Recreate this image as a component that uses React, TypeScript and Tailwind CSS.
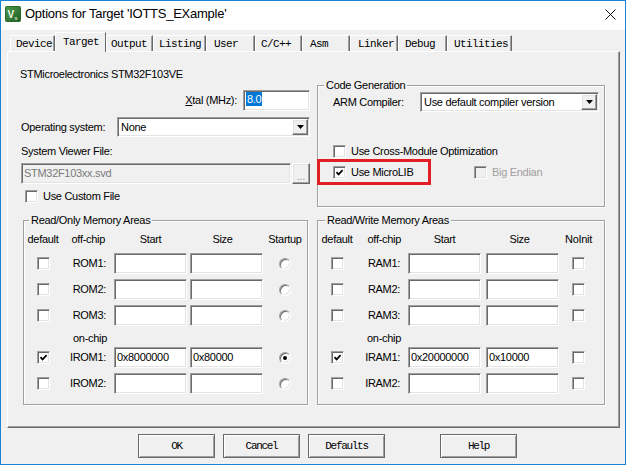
import React from 'react';

// 3D edge styles of the classic Windows controls
const sunken =
  'border border-t-[#a0a0a0] border-l-[#a0a0a0] border-r-white border-b-white shadow-[inset_1px_1px_0_#696969,inset_-1px_-1px_0_#e3e3e3]';
const raised =
  'border border-t-white border-l-white border-r-[#696969] border-b-[#696969] shadow-[inset_-1px_-1px_0_#a0a0a0,inset_1px_1px_0_#e3e3e3]';

const tabs = [
  { label: 'Device', cls: 'w-[45px] pl-[5px]' },
  { label: 'Target', cls: 'w-[51px] pl-[7px]', active: true },
  { label: 'Output', cls: 'w-[47px] pl-[4px]' },
  { label: 'Listing', cls: 'w-[53px] pl-[5px]' },
  { label: 'User', cls: 'w-[49px] pl-[7px]' },
  { label: 'C/C++', cls: 'w-[47px] pl-[5px]' },
  { label: 'Asm', cls: 'w-[48px] pl-[7px]' },
  { label: 'Linker', cls: 'w-[48px] pl-[7px]' },
  { label: 'Debug', cls: 'w-[49px] pl-[6px]' },
  { label: 'Utilities', cls: 'w-[65px] pl-[6px]' },
];

function Check({ checked = false, disabled = false }: { checked?: boolean; disabled?: boolean }) {
  return (
    <span
      className={`flex h-[13px] w-[13px] shrink-0 items-center justify-center ${sunken} ${
        disabled ? 'bg-[#f0f0f0]' : 'bg-white'
      }`}
    >
      {checked && (
        <svg width="9" height="9" viewBox="0 0 9 9">
          <path d="M1.5 4.2 L3.6 6.4 L7.6 2.2" fill="none" stroke="#000" strokeWidth="1.7" />
        </svg>
      )}
    </span>
  );
}

function Radio({ on = false }: { on?: boolean }) {
  return (
    <span
      className={`flex h-[12px] w-[12px] items-center justify-center rounded-full bg-white ${sunken}`}
    >
      {on && <span className="h-[4px] w-[4px] rounded-full bg-black" />}
    </span>
  );
}

function Combo({ value, className = '' }: { value: string; className?: string }) {
  return (
    <div className={`flex h-[20px] bg-white p-[1px] ${sunken} ${className}`}>
      <span className="flex flex-1 items-center pl-[2px]">{value}</span>
      <span className={`flex w-[16px] items-center justify-center bg-[#f0f0f0] ${raised}`}>
        <svg width="7" height="4" viewBox="0 0 7 4">
          <polygon points="0,0 7,0 3.5,4" fill="#000" />
        </svg>
      </span>
    </div>
  );
}

function Field({ value = '', className = '' }: { value?: string; className?: string }) {
  return (
    <div className={`flex h-[21px] w-[73px] items-start bg-white pl-[2px] pt-[2px] leading-[14px] ${sunken} ${className}`}>
      {value}
    </div>
  );
}

function Group({
  title,
  legend,
  className = '',
  children,
}: {
  title: string;
  legend: string;
  className?: string;
  children: React.ReactNode;
}) {
  return (
    <div
      className={`relative flex shrink-0 flex-col border border-[#a0a0a0] shadow-[inset_1px_1px_0_#fff,1px_1px_0_#fff] ${className}`}
    >
      <div className={`-mt-[7px] w-fit bg-[#f0f0f0] px-[2px] leading-[13px] ${legend}`}>{title}</div>
      {children}
    </div>
  );
}

type MemRow = { label: string; start?: string; size?: string; def?: boolean; on?: boolean };

function MemGroup({
  title,
  legend,
  className,
  rows,
  chip,
  lastHead,
  radio,
  cols,
}: {
  title: string;
  legend: string;
  className: string;
  rows: MemRow[];
  chip: MemRow[];
  lastHead: string;
  radio: boolean;
  cols: { offHead: string; sizeHead: string; gap: string; last: string };
}) {
  const line = (r: MemRow, extra: string) => (
    <div key={r.label} className={`flex h-[21px] items-center ${extra}`}>
      <div className="flex w-[38px] justify-center">
        <Check checked={r.def} />
      </div>
      <div className="w-[52px] pr-[8px] text-right">{r.label}</div>
      <Field value={r.start} />
      <Field value={r.size} className={cols.gap} />
      <div className={`flex justify-center ${cols.last}`}>{radio ? <Radio on={r.on} /> : <Check />}</div>
    </div>
  );

  return (
    <Group title={title} legend={legend} className={className}>
      <div className="mt-[5px] flex h-[14px] items-center leading-[14px]">
        <div className="w-[38px] text-center">default</div>
        <div className={`w-[52px] text-right ${cols.offHead}`}>off-chip</div>
        <div className="w-[73px] text-center">Start</div>
        <div className={`w-[73px] text-center ${cols.gap} ${cols.sizeHead}`}>Size</div>
        <div className={`text-center ${cols.last}`}>{lastHead}</div>
      </div>
      {rows.map((r, i) => line(r, i === 0 ? 'mt-[7px]' : 'mt-[5px]'))}
      <div className="mt-[5px] flex h-[14px] items-center leading-[14px]">
        <div className="w-[38px]" />
        <div className="w-[52px] pr-[7px] text-right">on-chip</div>
      </div>
      {chip.map((r, i) => line(r, i === 0 ? 'mt-[2px]' : 'mt-[5px]'))}
    </Group>
  );
}

function PushButton({ label, className = '' }: { label: string; className?: string }) {
  return (
    <div
      className={`flex h-[24px] w-[77px] items-center justify-center border border-[#696969] bg-[#f0f0f0] shadow-[inset_1px_1px_0_#fff,inset_-1px_-1px_0_#a0a0a0] font-['Liberation_Mono',monospace] text-[11px] tracking-[-1.3px] ${className}`}
    >
      {label}
    </div>
  );
}

export default function App() {
  return (
    <div className="flex h-[465px] w-[626px] flex-col overflow-hidden border border-[#1883d7] bg-[#f0f0f0] font-['Liberation_Sans',Arial,sans-serif] text-[11px] tracking-[-0.3px] text-black">
      {/* 타이틀 바 */}
      <div className="flex h-[29px] shrink-0 items-center bg-white pb-[3px]">
        <svg className="ml-[4px]" width="16" height="16" viewBox="0 0 16 16">
          <defs>
            <linearGradient id="kg" x1="0" y1="0" x2="1" y2="1">
              <stop offset="0" stopColor="#4f9a4f" />
              <stop offset="1" stopColor="#1f5f24" />
            </linearGradient>
          </defs>
          <rect x="0.5" y="0.5" width="15" height="15" rx="1" fill="url(#kg)" stroke="#2a6a2a" />
          <text x="2.5" y="11.5" fontSize="10" fontWeight="bold" fill="#f4f4e8" fontFamily="Liberation Sans">
            V
          </text>
          <text x="9.5" y="14" fontSize="6" fill="#f4f4e8" fontFamily="Liberation Sans">
            s
          </text>
        </svg>
        <span className="ml-[4px] text-[13px] tracking-[-0.25px]">Options for Target 'IOTTS_EXample'</span>
        <svg className="ml-auto mr-[9px]" width="11" height="11" viewBox="0 0 11 11">
          <path d="M0.5 0.5 L10.5 10.5 M10.5 0.5 L0.5 10.5" stroke="#111" strokeWidth="1" />
        </svg>
      </div>

      {/* 탭 */}
      <div className="flex h-[21px] shrink-0 items-end pl-[9px] font-['Liberation_Mono',monospace] text-[11px] tracking-[-0.6px]">
        {tabs.map((t) =>
          t.active ? (
            <div
              key={t.label}
              className={`relative z-10 -mb-[1px] flex h-[20px] items-start border-t border-l border-r border-t-white border-l-white border-r-[#696969] bg-[#f0f0f0] pt-[3px] leading-[13px] ${t.cls}`}
            >
              {t.label}
            </div>
          ) : (
            <div
              key={t.label}
              className={`flex h-[16px] items-start border-t border-l border-r border-t-white border-l-white border-r-[#696969] pt-[2px] leading-[13px] shadow-[inset_-1px_0_0_#a0a0a0] ${t.cls}`}
            >
              {t.label}
            </div>
          )
        )}
      </div>

      {/* 탭 패널 */}
      <div className="ml-[6px] flex h-[377px] w-[613px] shrink-0 flex-col border border-t-white border-l-white border-r-[#696969] border-b-[#696969] shadow-[inset_-1px_-1px_0_#a0a0a0]">
        <div className="flex">
          {/* 왼쪽 영역 */}
          <div className="ml-[12px] flex w-[290px] flex-col">
            <div className="mt-[15px] h-[14px] leading-[14px]">STMicroelectronics STM32F103VE</div>
            <div className="mt-[9px] flex h-[21px] items-center justify-end">
              <span className="mr-[6px]">
                <span className="underline">X</span>tal (MHz):
              </span>
              <div className={`flex h-[21px] w-[67px] items-start bg-white pl-[2px] pt-[1px] ${sunken}`}>
                <span className="bg-[#0078d7] px-[1px] leading-[14px] text-white">8.0</span>
              </div>
            </div>
            <div className="mt-[6px] flex h-[20px] items-center">
              <span className="ml-[1px] w-[96px]">Operating system:</span>
              <Combo value="None" className="w-[193px]" />
            </div>
            <div className="ml-[1px] mt-[7px] h-[14px] leading-[14px]">System Viewer File:</div>
            <div className="mt-[5px] flex h-[21px]">
              <div className={`ml-[1px] flex w-[270px] items-center bg-[#f0f0f0] pl-[2px] text-[#7a7a7a] ${sunken}`}>
                STM32F103xx.svd
              </div>
              <div className={`ml-[1px] flex w-[18px] items-end justify-center bg-[#f0f0f0] pb-[2px] leading-[10px] text-[#9a9a9a] ${raised}`}>
                ...
              </div>
            </div>
            <div className="mt-[6px] flex h-[13px] items-center">
              <span className="ml-[5px]">
                <Check />
              </span>
              <span className="ml-[5px]">Use Custom File</span>
            </div>
          </div>

          {/* 코드 생성 */}
          <Group title="Code Generation" legend="ml-[6px]" className="ml-[7px] mt-[33px] h-[122px] w-[288px]">
            <div className="flex h-[20px] items-center">
              <span className="ml-[15px] w-[87px]">ARM Compiler:</span>
              <Combo value="Use default compiler version" className="w-[179px]" />
            </div>
            <div className="mt-[33px] flex h-[13px] items-center pl-[15px]">
              <Check />
              <span className="ml-[5px]">Use Cross-Module Optimization</span>
            </div>
            <div className="mt-[8px] flex h-[13px] items-center pl-[15px]">
              <div className="flex w-[141px] items-center">
                <Check checked />
                <span className="ml-[5px]">Use MicroLIB</span>
              </div>
              <Check disabled />
              <span className="ml-[5px] text-[#a0a0a0]">Big Endian</span>
            </div>
            {/* 빨간 강조 박스 */}
            <div className="absolute left-[-1px] top-[73px] h-[26px] w-[114px] border-[3px] border-[#e31e24]" />
          </Group>
        </div>

        {/* 메모리 영역 */}
        <div className="mt-[13px] flex">
          <MemGroup
            title="Read/Only Memory Areas"
            legend="ml-[5px]"
            className="ml-[15px] h-[185px] w-[285px]"
            rows={[{ label: 'ROM1:' }, { label: 'ROM2:' }, { label: 'ROM3:' }]}
            chip={[
              { label: 'IROM1:', start: '0x8000000', size: '0x80000', def: true, on: true },
              { label: 'IROM2:' },
            ]}
            lastHead="Startup"
            radio
            cols={{ offHead: 'pr-[9px]', sizeHead: 'pr-[8px]', gap: 'ml-[3px]', last: 'w-[44px]' }}
          />
          <MemGroup
            title="Read/Write Memory Areas"
            legend="ml-[7px]"
            className="ml-[9px] h-[185px] w-[288px]"
            rows={[{ label: 'RAM1:' }, { label: 'RAM2:' }, { label: 'RAM3:' }]}
            chip={[
              { label: 'IRAM1:', start: '0x20000000', size: '0x10000', def: true },
              { label: 'IRAM2:' },
            ]}
            lastHead="NoInit"
            radio={false}
            cols={{ offHead: 'pr-[7px]', sizeHead: 'pr-[6px]', gap: 'ml-[5px]', last: 'w-[44px] pr-[5px]' }}
          />
        </div>
      </div>

      {/* 하단 버튼 */}
      <div className="mt-[6px] flex pl-[137px]">
        <PushButton label="OK" />
        <PushButton label="Cancel" className="ml-[8px]" />
        <PushButton label="Defaults" className="ml-[8px]" />
        <PushButton label="Help" className="ml-[55px]" />
      </div>
    </div>
  );
}
